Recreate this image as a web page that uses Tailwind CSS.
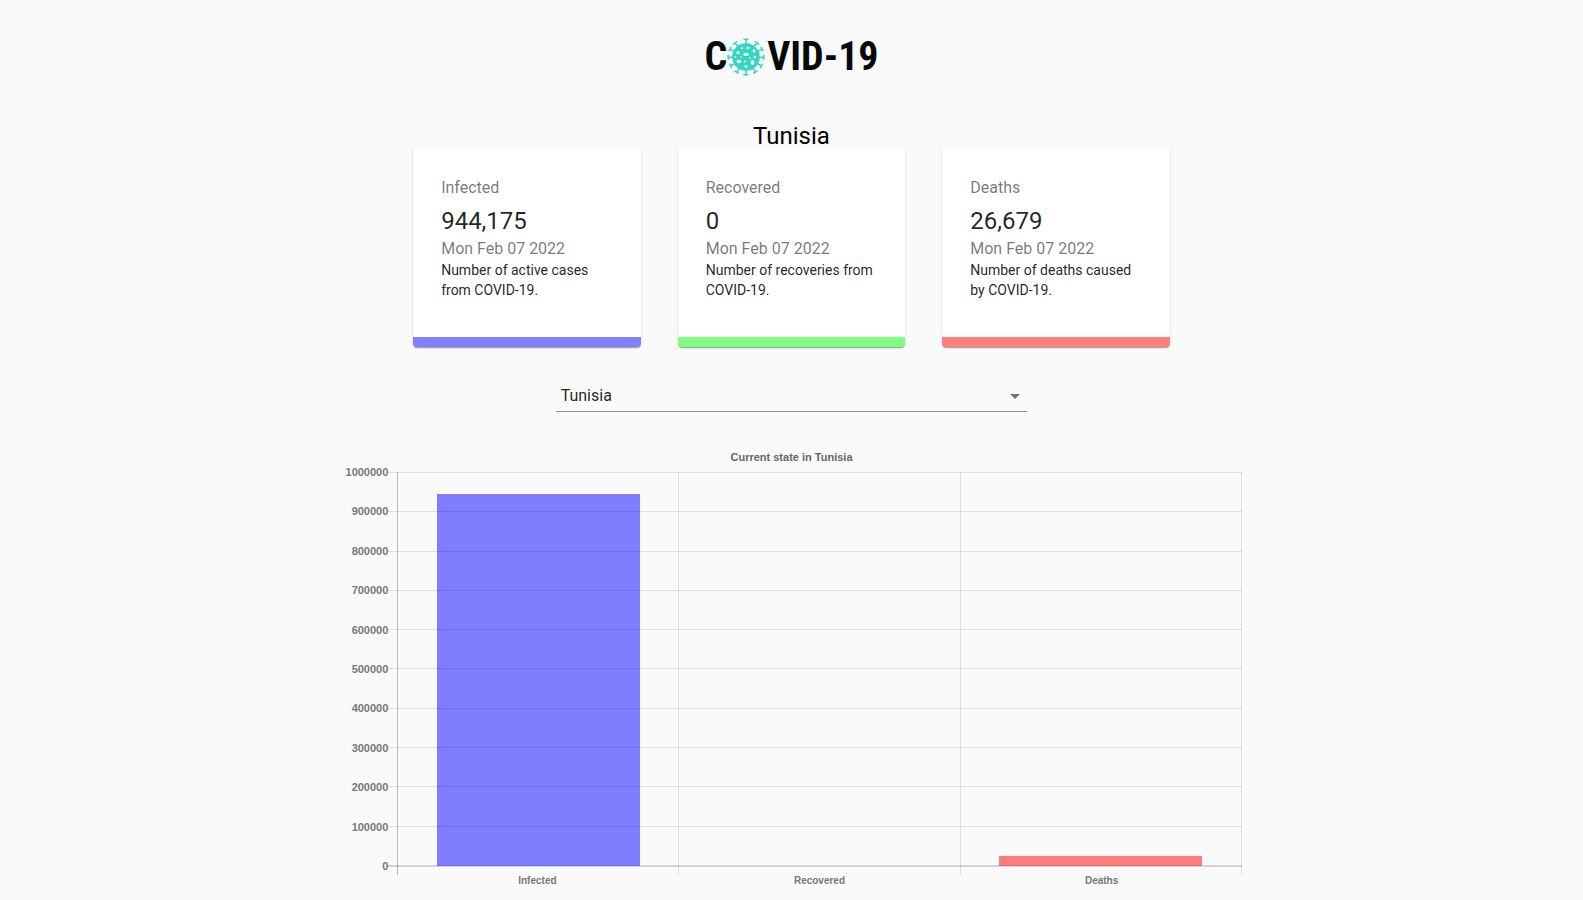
<!DOCTYPE html>
<html lang="en">
<head>
<meta charset="utf-8">
<meta name="viewport" content="width=device-width, initial-scale=1">
<title>COVID-19 Tracker</title>
<script src="https://cdn.jsdelivr.net/npm/@tailwindcss/browser@4"></script>
</head>
<body class="bg-[#fafafa] font-[Roboto,sans-serif] text-base text-black/87">
<main class="flex flex-col items-center">
  <h1 class="mt-8 flex h-[50px] items-center font-['Roboto_Condensed',Roboto,sans-serif] text-[40px] leading-none font-bold text-[#080a0a]" aria-label="COVID-19">
    <span>C</span>
    <svg class="h-10 w-10" viewBox="-19 -20 40 40" aria-hidden="true">
      <defs><g id="spike"><path d="M0-12V-17.5M-2-17.8H2" fill="none" stroke="#35d5c3" stroke-width="1.5" stroke-linecap="round"/></g></defs>
      <use href="#spike"/><use href="#spike" transform="rotate(38)"/><use href="#spike" transform="rotate(64)"/><use href="#spike" transform="rotate(91)"/><use href="#spike" transform="rotate(120)"/><use href="#spike" transform="rotate(148)"/><use href="#spike" transform="rotate(180)"/><use href="#spike" transform="rotate(212)"/><use href="#spike" transform="rotate(240)"/><use href="#spike" transform="rotate(269)"/><use href="#spike" transform="rotate(296)"/><use href="#spike" transform="rotate(322)"/>
      <circle r="13.8" fill="#35d5c3"/>
      <g fill="#f4fdfc">
        <ellipse cx="0" cy="-2.6" rx="2.8" ry="1.7"/><ellipse cx="-7" cy="4.5" rx="2.5" ry="1.7"/><ellipse cx="6.5" cy="5.5" rx="1.8" ry="2.4"/><ellipse cx="-1" cy="4.5" rx="1.2" ry="1"/>
        <circle cx="-8" cy="-4.5" r="1.5"/><circle cx="2" cy="-9" r="1.3"/><circle cx="-4" cy="-9" r="1"/><circle cx="8" cy="-6" r="1.4"/><circle cx="-10.5" cy="0" r=".9"/><circle cx="0" cy="9.5" r="1.4"/><circle cx="9" cy="0" r="1.2"/><circle cx="4" cy="1" r=".8"/><circle cx="-5" cy="0" r=".7"/>
      </g>
    </svg>
    <span>VID-19</span>
  </h1>

  <h2 class="mt-[42px] -mb-px text-center text-2xl leading-6 text-black">Tunisia</h2>

  <section class="grid w-[47.8%] grid-cols-3 gap-[37px]" aria-label="Totals">
    <article class="rounded border-b-10 border-[#7f7fff] bg-white px-7 pt-[29px] pb-[37px] shadow-[0_2px_1px_-1px_rgba(0,0,0,0.2),0_1px_1px_0_rgba(0,0,0,0.14),0_1px_3px_0_rgba(0,0,0,0.12)]">
      <p class="mb-[5px] text-black/54">Infected</p>
      <h3 class="text-2xl leading-8">944,175</h3>
      <p class="leading-[23px] text-black/54">Mon Feb 07 2022</p>
      <p class="text-sm">Number of active cases from COVID-19.</p>
    </article>
    <article class="rounded border-b-10 border-[#7fff7f] bg-white px-7 pt-[29px] pb-[37px] shadow-[0_2px_1px_-1px_rgba(0,0,0,0.2),0_1px_1px_0_rgba(0,0,0,0.14),0_1px_3px_0_rgba(0,0,0,0.12)]">
      <p class="mb-[5px] text-black/54">Recovered</p>
      <h3 class="text-2xl leading-8">0</h3>
      <p class="leading-[23px] text-black/54">Mon Feb 07 2022</p>
      <p class="text-sm">Number of recoveries from COVID-19.</p>
    </article>
    <article class="rounded border-b-10 border-[#ff7f7f] bg-white px-7 pt-[29px] pb-[37px] shadow-[0_2px_1px_-1px_rgba(0,0,0,0.2),0_1px_1px_0_rgba(0,0,0,0.14),0_1px_3px_0_rgba(0,0,0,0.12)]">
      <p class="mb-[5px] text-black/54">Deaths</p>
      <h3 class="text-2xl leading-8">26,679</h3>
      <p class="leading-[23px] text-black/54">Mon Feb 07 2022</p>
      <p class="text-sm">Number of deaths caused by COVID-19.</p>
    </article>
  </section>

  <div class="relative mt-[33px] w-[29.8%]">
    <select aria-label="Country" class="block h-8 w-full appearance-none border-b border-black/42 bg-transparent pr-6 pl-[5px] outline-none">
      <option>Tunisia</option>
      <option>Global</option>
    </select>
    <svg class="pointer-events-none absolute top-1 right-0 h-6 w-6 fill-black/54" viewBox="0 0 24 24" aria-hidden="true"><path d="M7 10l5 5 5-5z"/></svg>
  </div>

  <figure class="mt-[37px] w-[57%] font-['Liberation_Sans',Arial,sans-serif] text-[11px] leading-4 font-bold text-[#777]">
    <figcaption class="text-center text-[#666]">Current state in Tunisia</figcaption>
    <div class="mt-[7px] flex pr-px">
      <div class="-mt-2 -mb-[7px] flex w-12 flex-col justify-between text-right">
        <span>1000000</span><span>900000</span><span>800000</span><span>700000</span><span>600000</span><span>500000</span><span>400000</span><span>300000</span><span>200000</span><span>100000</span><span>0</span>
      </div>
      <div class="relative h-[395px] flex-1">
        <div class="flex h-full flex-col border-b-2 border-black/15">
          <i class="flex-1 border-t border-black/10"></i><i class="flex-1 border-t border-black/10"></i><i class="flex-1 border-t border-black/10"></i><i class="flex-1 border-t border-black/10"></i><i class="flex-1 border-t border-black/10"></i><i class="flex-1 border-t border-black/10"></i><i class="flex-1 border-t border-black/10"></i><i class="flex-1 border-t border-black/10"></i><i class="flex-1 border-t border-black/10"></i><i class="flex-1 border-t border-black/10"></i>
        </div>
        <!-- Category columns; they run past the baseline as tick marks -->
        <div class="absolute inset-y-0 right-0 -bottom-2 left-[9px] grid grid-cols-3 border-r border-black/10">
          <div class="flex items-end justify-center border-l border-black/25 pb-[9px]"><div class="w-[72.5%] bg-[#0000ff]/50" style="height:94.4175%"></div></div>
          <div class="flex items-end justify-center border-l border-black/10 pb-[9px]"></div>
          <div class="flex items-end justify-center border-l border-black/10 pb-[9px]"><div class="w-[72.5%] bg-[#ff0000]/50" style="height:2.6679%"></div></div>
        </div>
      </div>
    </div>
    <div class="mt-[6px] grid grid-cols-3 pl-14 text-center text-[10px]">
      <span>Infected</span><span>Recovered</span><span>Deaths</span>
    </div>
  </figure>
</main>
</body>
</html>
